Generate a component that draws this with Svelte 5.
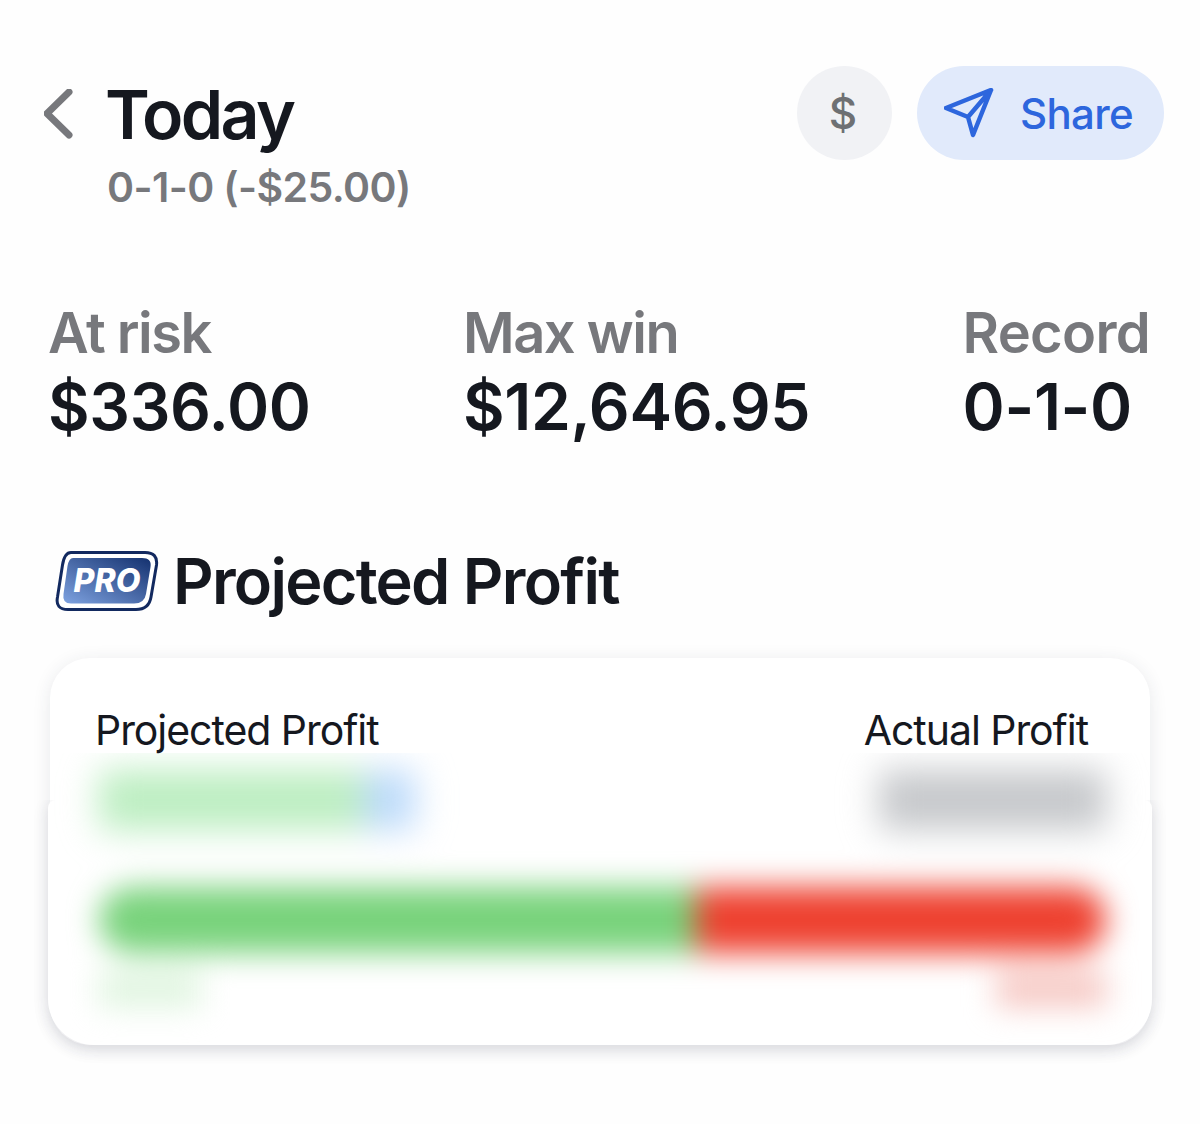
<script>
	let stats = [
		{ label: 'At risk', value: '$336.00' },
		{ label: 'Max win', value: '$12,646.95' },
		{ label: 'Record', value: '0-1-0' }
	];
</script>

<main class="page">
	<header class="top">
		<button class="back" aria-label="Back">
			<svg width="30" height="50" viewBox="0 0 30 50" fill="none">
				<path d="M25 3 L3 24.500 L25 46" stroke="#77787c" stroke-width="7" stroke-linecap="round" stroke-linejoin="round" />
			</svg>
		</button>
		<div class="titles">
			<h1>Today</h1>
			<p>0-1-0 (-$25.00)</p>
		</div>
		<div class="actions">
			<button class="circle">$</button>
			<button class="share">
				<svg width="50" height="50" viewBox="0 0 50 50" fill="none">
					<path d="M47 2 L2 20 L24 29 L29 47 Z M47 2 L24 29" stroke="#2d66dd" stroke-width="4.500" stroke-linecap="round" stroke-linejoin="round" />
				</svg>
				<span>Share</span>
			</button>
		</div>
	</header>

	<section class="stats">
		{#each stats as stat}
			<div class="stat">
				<div class="label">{stat.label}</div>
				<div class="value">{stat.value}</div>
			</div>
		{/each}
	</section>

	<div class="pro-title">
		<svg class="badge" width="104" height="60" viewBox="0 0 104 60">
			<defs>
				<linearGradient id="pro-fill" x1="0" y1="1" x2="1" y2="0">
					<stop offset="0" stop-color="#7ea2e0" />
					<stop offset="1" stop-color="#14316f" />
				</linearGradient>
			</defs>
			<path d="M16 1.500 H90 Q103 1.500 101.500 14 L96 46 Q94 58.500 81 58.500 H13 Q0 58.500 2.500 46 L7.500 14 Q9.500 1.500 16 1.500 Z" fill="#fff" stroke="#12295f" stroke-width="3" />
			<path d="M18 7 H87 Q97 7 95.500 16 L91 43 Q89.500 52.500 79 52.500 H16 Q7 52.500 8.500 43 L12.500 15 Q14 7 18 7 Z" fill="url(#pro-fill)" />
			<text x="52" y="41" text-anchor="middle" class="pro-text">PRO</text>
		</svg>
		<h2>Projected Profit</h2>
	</div>

	<section class="card">
		<div class="card-head">
			<span>Projected Profit</span>
			<span>Actual Profit</span>
		</div>
		<div class="masked">
			<div class="blurred">
				<div class="row amounts">
					<div class="amount">
						<div class="b-green"></div>
						<div class="b-blue"></div>
					</div>
					<div class="b-grey"></div>
				</div>
				<div class="bar">
					<div class="bar-green"></div>
					<div class="bar-red"></div>
				</div>
				<div class="row foot">
					<div class="f-green"></div>
					<div class="f-red"></div>
				</div>
			</div>
		</div>
	</section>
</main>

<style>
	:global(body) {
		background: #fefefe;
	}

	.page {
		height: 1124px;
		overflow: hidden;
		font-family: Inter, 'Liberation Sans', sans-serif;
		color: #15181f;
	}

	button {
		border: none;
		background: none;
		padding: 0;
		font-family: inherit;
	}

	.top {
		display: flex;
		align-items: flex-start;
		padding: 66px 36px 0 44px;
	}

	.back {
		width: 61px;
		height: 50px;
		margin-top: 23px;
		text-align: left;
	}

	.titles {
		flex: 1;
		margin-top: 8px;
	}

	h1 {
		margin: 0;
		font-size: 68px;
		line-height: 80px;
		font-weight: 600;
		letter-spacing: -2.600px;
	}

	.titles p {
		margin: 10px 0 0 2px;
		font-size: 41px;
		line-height: 46px;
		font-weight: 600;
		color: #77787c;
		letter-spacing: -0.600px;
	}

	.actions {
		display: flex;
		gap: 25px;
	}

	.circle {
		width: 95px;
		height: 94px;
		border-radius: 50%;
		background: #f1f2f5;
		color: #6e7073;
		font-size: 44px;
		font-weight: 500;
		padding-right: 3px;
	}

	.share {
		display: flex;
		align-items: center;
		gap: 26px;
		width: 247px;
		height: 94px;
		padding-left: 27px;
		box-sizing: border-box;
		border-radius: 47px;
		background: #e1eafb;
		color: #2d66dd;
		font-size: 42px;
		font-weight: 500;
		letter-spacing: -0.700px;
	}

	.stats {
		display: flex;
		justify-content: space-between;
		padding: 88px 50px 0 48px;
	}

	.label {
		font-size: 56px;
		line-height: 70px;
		font-weight: 600;
		color: #77787c;
		letter-spacing: -1.500px;
	}

	.stat:last-child .label {
		letter-spacing: -0.700px;
	}

	.value {
		font-size: 64px;
		line-height: 78px;
		font-weight: 600;
		letter-spacing: -0.350px;
	}

	.pro-title {
		display: flex;
		align-items: center;
		gap: 14px;
		padding: 98px 0 0 55px;
	}

	h2 {
		margin: 0;
		font-size: 63px;
		line-height: 74px;
		font-weight: 600;
		letter-spacing: -1.730px;
	}

	.pro-text {
		font-size: 32px;
		font-weight: 800;
		font-style: italic;
		fill: #fff;
	}

	/* the lower part of the card sits 2px wider than the top, as in the capture */
	.card {
		position: relative;
		z-index: 0;
		margin: 40px 50px 0;
		height: 387px;
		border-radius: 40px;
		background: #fff;
		box-shadow: 0 3px 18px rgba(40, 45, 70, 0.1);
	}

	.card::before {
		content: '';
		position: absolute;
		z-index: -1;
		left: -2px;
		right: -2px;
		top: 142px;
		bottom: 0;
		border-radius: 8px 8px 46px 46px;
		background: #fff;
		box-shadow: 0 4px 16px rgba(40, 45, 70, 0.12);
		clip-path: inset(0 -30px -30px -30px);
	}

	.card-head {
		display: flex;
		justify-content: space-between;
		padding: 48px 62px 0 45px;
		height: 47px;
		font-size: 41px;
		line-height: 48px;
		letter-spacing: -1.050px;
	}

	.masked {
		overflow: hidden;
		height: 280px;
		margin: 0 -2px;
		padding-bottom: 12px;
	}

	.blurred {
		filter: blur(15px);
		padding: 17px 46px 0 51px;
	}

	.row {
		display: flex;
		justify-content: space-between;
	}

	.amounts {
		filter: blur(9px);
	}

	.amount {
		display: flex;
	}

	.b-green {
		width: 264px;
		height: 60px;
		background: #bceec1;
	}

	.b-blue {
		width: 52px;
		height: 60px;
		background: #bcdafb;
	}

	.b-grey {
		width: 227px;
		height: 60px;
		background: #c6c8cb;
	}

	.bar {
		display: flex;
		height: 66px;
		margin-top: 57px;
		border-radius: 33px;
		overflow: hidden;
	}

	.bar-green {
		width: 597px;
		background: #79d37c;
	}

	.bar-red {
		flex: 1;
		background: #ee4130;
	}

	.foot {
		margin-top: 18px;
	}

	.f-green {
		width: 102px;
		height: 36px;
		background: #e0f5e0;
	}

	.f-red {
		width: 110px;
		height: 36px;
		background: #f6c8c3;
	}
</style>
